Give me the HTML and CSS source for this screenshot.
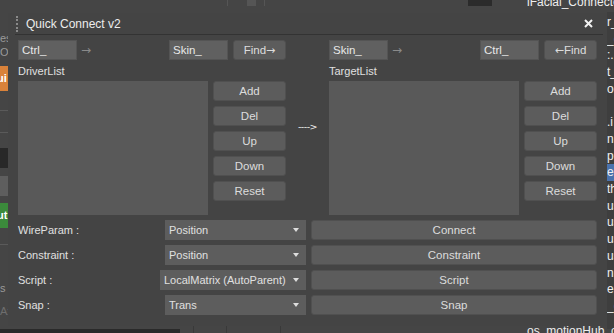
FILE: index.html
```html
<!DOCTYPE html>
<html lang="en">
<head>
    <meta charset="UTF-8">
    <meta name="viewport" content="width=device-width, initial-scale=1.0">
    <title>Quick Connect v2</title>
    <link rel="stylesheet" href="styles.css">
</head>
<body>
    <!-- what is left visible of the main app behind the dialog -->
    <div class="desk">
        <div class="desk-left">
            <span class="dl-text t1">es</span>
            <span class="dl-text t2">O</span>
            <div class="dl-orange">ui</div>
            <div class="dl-line l1"></div>
            <div class="dl-line l2"></div>
            <div class="dl-dark"></div>
            <div class="dl-gray"></div>
            <div class="dl-green">ut</div>
            <div class="dl-line l3"></div>
            <span class="dl-text t3">s i</span>
            <span class="dl-text t4">Ax</span>
        </div>
        <div class="desk-top">
            <span class="dt-mark m1"></span>
            <span class="dt-mark m2"></span>
            <span class="dt-mark m3"></span>
            <span class="dt-dark"></span>
            <span class="dt-name">iFacial_Connector_</span>
        </div>
        <div class="desk-right">
            <div>r_</div>
            <div>_c</div>
            <div>:.</div>
            <div>t_</div>
            <div>oo</div>
            <div>&nbsp;</div>
            <div>.i</div>
            <div>n</div>
            <div>p</div>
            <div class="sel">er</div>
            <div>th</div>
            <div>us</div>
            <div>us</div>
            <div>us</div>
            <div>us</div>
            <div>n.</div>
            <div>er</div>
            <div>_c</div>
        </div>
        <div class="desk-bottom">
            <span class="db-dark"></span>
            <span class="db-cell c1"></span>
            <span class="db-cell c2"></span>
            <span class="db-cell c3"></span>
            <span class="db-name">os_motionHub_op</span>
        </div>
    </div>

    <div class="dialog">
        <div class="titlebar">
            <span class="grip"></span>
            <span class="title">Quick Connect v2</span>
            <svg class="close" width="9" height="9" viewBox="0 0 9 9">
                <path d="M1 1 L8 8 M8 1 L1 8" stroke="#f2f2f2" stroke-width="2"/>
            </svg>
        </div>
        <div class="separator"></div>

        <div class="content">
            <div class="lists">
                <div class="panel">
                    <div class="find-row">
                        <input class="field" type="text" value="Ctrl_">
                        <span class="arrow">→</span>
                        <input class="field push" type="text" value="Skin_">
                        <button class="btn find">Find<span class="arr">→</span></button>
                    </div>
                    <div class="list-label">DriverList</div>
                    <div class="list-row">
                        <div class="listbox"></div>
                        <div class="btn-col">
                            <button class="btn">Add</button>
                            <button class="btn">Del</button>
                            <button class="btn">Up</button>
                            <button class="btn">Down</button>
                            <button class="btn">Reset</button>
                        </div>
                    </div>
                </div>
                <div class="mid">----&gt;</div>
                <div class="panel">
                    <div class="find-row">
                        <input class="field" type="text" value="Skin_">
                        <span class="arrow">→</span>
                        <input class="field push" type="text" value="Ctrl_">
                        <button class="btn find"><span class="arr">←</span>Find</button>
                    </div>
                    <div class="list-label">TargetList</div>
                    <div class="list-row">
                        <div class="listbox"></div>
                        <div class="btn-col">
                            <button class="btn">Add</button>
                            <button class="btn">Del</button>
                            <button class="btn">Up</button>
                            <button class="btn">Down</button>
                            <button class="btn">Reset</button>
                        </div>
                    </div>
                </div>
            </div>

            <div class="params">
                <div class="param-row">
                    <span class="param-label">WireParam :</span>
                    <div class="dropdown">Position<span class="caret"></span></div>
                    <button class="btn wide">Connect</button>
                </div>
                <div class="param-row">
                    <span class="param-label">Constraint :</span>
                    <div class="dropdown">Position<span class="caret"></span></div>
                    <button class="btn wide">Constraint</button>
                </div>
                <div class="param-row">
                    <span class="param-label">Script :</span>
                    <div class="dropdown long">LocalMatrix (AutoParent)<span class="caret"></span></div>
                    <button class="btn wide">Script</button>
                </div>
                <div class="param-row">
                    <span class="param-label">Snap :</span>
                    <div class="dropdown">Trans<span class="caret"></span></div>
                    <button class="btn wide">Snap</button>
                </div>
            </div>
        </div>
    </div>
</body>
</html>
```

FILE: styles.css
```css
body {
    margin: 0;
    width: 614px;
    height: 333px;
    overflow: hidden;
    position: relative;
    background-color: #454545;
    font-family: "Liberation Sans", Arial, sans-serif;
    font-size: 11px;
    color: #e0e0e0;
}

/* background app */
.desk-left {
    position: absolute;
    left: 0;
    top: 0;
    width: 8px;
    height: 333px;
    overflow: hidden;
}
.dl-text {
    position: absolute;
    left: 0;
    color: #9a9a9a;
    font-size: 11px;
    line-height: 12px;
    white-space: nowrap;
}
.t1 { top: 32px; }
.t2 { top: 46px; }
.t3 { top: 282px; }
.t4 { top: 305px; color: #6e6e6e; }
.dl-orange {
    position: absolute;
    top: 66px;
    left: 0;
    width: 8px;
    height: 25px;
    background-color: #d9823a;
    color: #fff;
    font-weight: bold;
    line-height: 25px;
    text-indent: -3px;
}
.dl-line {
    position: absolute;
    left: 0;
    width: 8px;
    height: 1px;
    background-color: #5a5a5a;
}
.l1 { top: 110px; }
.l2 { top: 132px; }
.l3 { top: 244px; }
.dl-dark {
    position: absolute;
    top: 148px;
    left: 0;
    width: 8px;
    height: 20px;
    background-color: #282828;
}
.dl-gray {
    position: absolute;
    top: 176px;
    left: 0;
    width: 8px;
    height: 20px;
    background-color: #5e5e5e;
}
.dl-green {
    position: absolute;
    top: 203px;
    left: 0;
    width: 8px;
    height: 25px;
    background-color: #3b8a3b;
    color: #fff;
    font-weight: bold;
    line-height: 25px;
    text-indent: -3px;
}
.dt-mark {
    position: absolute;
    top: 0;
    height: 6px;
    background-color: #555;
}
.m1 { left: 227px; width: 1px; }
.m2 { left: 247px; width: 9px; }
.m3 { left: 264px; width: 1px; }
.dt-dark {
    position: absolute;
    top: 0;
    left: 468px;
    width: 24px;
    height: 6px;
    background-color: #2b2b2b;
}
.dt-name {
    position: absolute;
    top: -5px;
    left: 527px;
    color: #eee;
    font-size: 12px;
    white-space: nowrap;
}
.desk-right {
    position: absolute;
    top: 12px;
    left: 607px;
    width: 7px;
    height: 315px;
    overflow: hidden;
    background-color: #3e3e3e;
    color: #f0f0f0;
    font-size: 12px;
    line-height: 16.7px;
    padding-top: 2px;
    white-space: nowrap;
}
.desk-right .sel {
    background-color: #4a72ad;
}
.db-dark {
    position: absolute;
    top: 329px;
    left: 0;
    width: 180px;
    height: 4px;
    background-color: #2a2a2a;
}
.db-cell {
    position: absolute;
    top: 326px;
    height: 7px;
    width: 1px;
    background-color: #393939;
}
.c1 { left: 193px; }
.c2 { left: 226px; }
.c3 { left: 280px; }
.db-name {
    position: absolute;
    top: 324px;
    left: 527px;
    color: #eee;
    font-size: 12px;
    white-space: nowrap;
}

/* dialog */
.dialog {
    position: absolute;
    left: 8px;
    top: 13px;
    width: 599px;
    height: 313px;
    background-color: #444444;
}
.titlebar {
    height: 21px;
    display: flex;
    align-items: center;
    padding-left: 8px;
}
.grip {
    width: 0;
    height: 16px;
    border-left: 2px dotted #8a8a8a;
}
.title {
    margin-left: 8px;
    color: #ececec;
    font-size: 12px;
}
.close {
    margin-left: auto;
    margin-right: 14px;
}
.separator {
    height: 1px;
    margin: 0 4px 0 7px;
    background-color: #333333;
}
.content {
    padding: 5px 10px 0 10px;
}
.lists {
    display: flex;
}
.panel {
    width: 268px;
}
.mid {
    width: 43px;
    padding-top: 81px;
    text-align: center;
    color: #f2f2f2;
    font-family: "DejaVu Sans", sans-serif;
    font-size: 9.5px;
    letter-spacing: -0.5px;
}
.find-row {
    display: flex;
    align-items: center;
    height: 20px;
}
.field {
    width: 59px;
    height: 20px;
    box-sizing: border-box;
    margin: 0;
    padding: 0 3px;
    border: 1px solid #545454;
    background-color: #606060;
    color: #e8e8e8;
    font-family: inherit;
    font-size: 11.5px;
    outline: none;
}
.arrow {
    margin-left: 4px;
    color: #8a8a8a;
    font-family: "DejaVu Sans", sans-serif;
    font-size: 12px;
}
.arr {
    font-family: "DejaVu Sans", sans-serif;
    font-size: 11px;
}
.push {
    margin-left: auto;
}
.btn {
    height: 20px;
    box-sizing: border-box;
    margin: 0;
    padding: 0;
    border: 1px solid #505050;
    border-radius: 3px;
    background-color: #5c5c5c;
    color: #dcdcdc;
    font-family: inherit;
    font-size: 11.5px;
}
.find {
    width: 53px;
    margin-left: 5px;
}
.list-label {
    height: 21px;
    line-height: 22px;
}
.list-row {
    display: flex;
}
.listbox {
    width: 190px;
    height: 134px;
    background-color: #595959;
}
.btn-col {
    width: 73px;
    margin-left: 5px;
    display: flex;
    flex-direction: column;
    gap: 5px;
}
.params {
    margin-top: 5px;
    display: flex;
    flex-direction: column;
    gap: 5px;
}
.param-row {
    display: flex;
    align-items: center;
    height: 20px;
}
.param-label {
    flex: 1;
}
.dropdown {
    width: 141px;
    height: 20px;
    box-sizing: border-box;
    padding-left: 4px;
    line-height: 20px;
    background-color: #5d5d5d;
    position: relative;
    white-space: nowrap;
}
.dropdown.long {
    width: 146px;
}
.caret {
    position: absolute;
    right: 7px;
    top: 8px;
    border-left: 3px solid transparent;
    border-right: 3px solid transparent;
    border-top: 4px solid #dddddd;
}
.wide {
    width: 286px;
    margin-left: 5px;
}
```
